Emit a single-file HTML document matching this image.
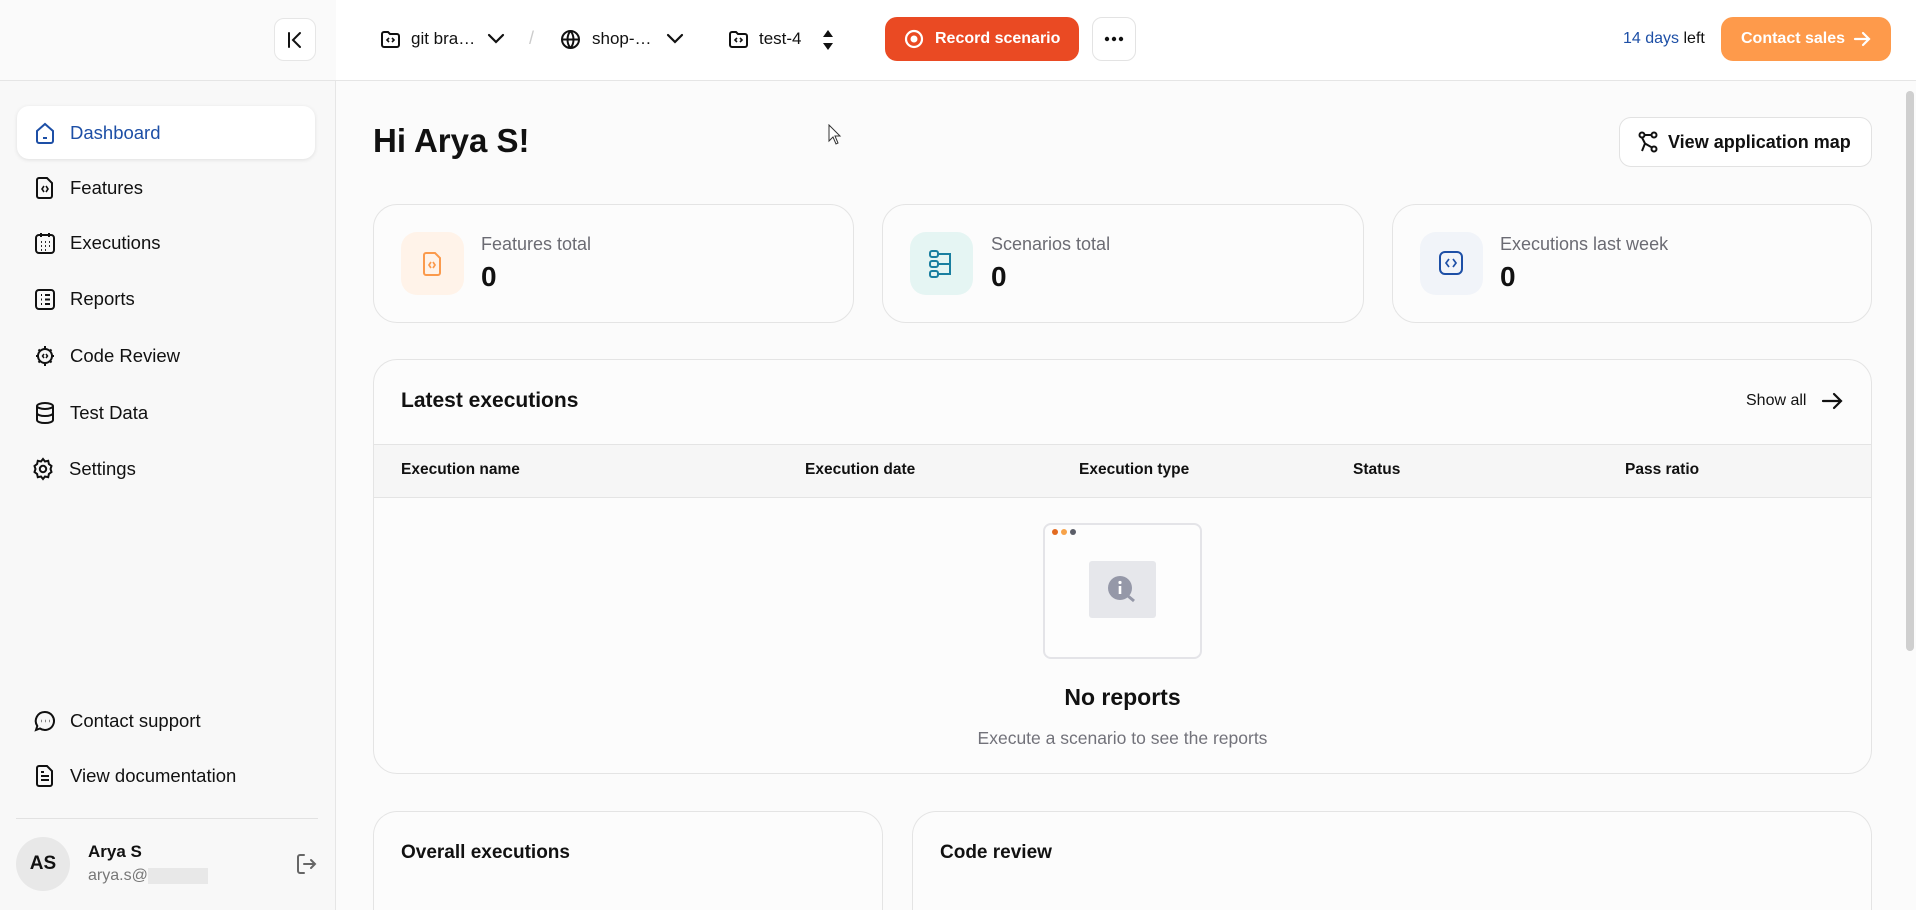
<!DOCTYPE html>
<html style="overflow:hidden;height:910px"><head><meta charset="utf-8"><style>
*{box-sizing:border-box;margin:0;padding:0}
body{width:1916px;height:910px;overflow:hidden;background:#fbfbfb;font-family:"Liberation Sans",sans-serif;color:#111;position:relative}
.a{position:absolute}
svg{display:block}
.side{left:0;top:0;width:336px;height:910px;background:#f8f8f8;border-right:1px solid #e6e6e6}
.hdr{left:336px;top:0;width:1580px;height:81px;background:#fff;border-bottom:1px solid #e5e5e5}
.sidetop{left:0;top:0;width:336px;height:81px;background:#fafafa;border-bottom:1px solid #e5e5e5}
.nav{left:17px;width:298px;height:53px;display:flex;align-items:center;padding-left:17px;font-size:18.5px;gap:14px}
.card{background:#fcfcfc;border:1px solid #e4e4e4;border-radius:24px}
.lbl{font-size:18px;color:#6b6b73}
.val{font-size:28px;font-weight:bold}
.th{font-size:15.5px;font-weight:bold;top:461px}
</style></head><body>
<div class="a side"></div>
<div class="a sidetop"></div>
<div class="a hdr"></div>
<div class="a" style="left:274px;top:18px;width:42px;height:43px;background:#fff;border:1px solid #e6e6e6;border-radius:10px"></div>
<svg class="a" style="left:284px;top:29px" width="22" height="22" viewBox="0 0 22 22" fill="none" stroke="#111" stroke-width="2" stroke-linecap="round"><path d="M5 4v14M16 4l-7 7 7 7"/></svg>
<svg class="a" style="left:380px;top:29px" width="21" height="21" viewBox="0 0 21 21" fill="none" stroke="#111" stroke-width="2"><path d="M2 5a2 2 0 0 1 2-2h4l2 2h7a2 2 0 0 1 2 2v9a2 2 0 0 1-2 2H4a2 2 0 0 1-2-2z"/><path d="M9 9l-2 2 2 2M12 9l2 2-2 2" stroke-width="1.6"/></svg>
<div class="a" style="left:411px;top:29px;font-size:17px">git bra…</div>
<svg class="a" style="left:487px;top:32px" width="18" height="14" viewBox="0 0 18 14" fill="none" stroke="#111" stroke-width="2.2" stroke-linecap="round"><path d="M2 3l7 7 7-7"/></svg>
<div class="a" style="left:529px;top:28px;font-size:18px;color:#ccc">/</div>
<svg class="a" style="left:560px;top:29px" width="21" height="21" viewBox="0 0 21 21" fill="none" stroke="#111" stroke-width="2"><circle cx="10.5" cy="10.5" r="8.5"/><path d="M2 10.5h17M10.5 2c-4 4.5-4 12.5 0 17M10.5 2c4 4.5 4 12.5 0 17"/></svg>
<div class="a" style="left:592px;top:29px;font-size:17px">shop-…</div>
<svg class="a" style="left:666px;top:32px" width="18" height="14" viewBox="0 0 18 14" fill="none" stroke="#111" stroke-width="2.2" stroke-linecap="round"><path d="M2 3l7 7 7-7"/></svg>
<svg class="a" style="left:728px;top:29px" width="21" height="21" viewBox="0 0 21 21" fill="none" stroke="#111" stroke-width="2"><path d="M2 5a2 2 0 0 1 2-2h4l2 2h7a2 2 0 0 1 2 2v9a2 2 0 0 1-2 2H4a2 2 0 0 1-2-2z"/><path d="M9 9l-2 2 2 2M12 9l2 2-2 2" stroke-width="1.6"/></svg>
<div class="a" style="left:759px;top:29px;font-size:17px">test-4</div>
<svg class="a" style="left:822px;top:29px" width="12" height="22" viewBox="0 0 12 22" fill="#111"><path d="M6 1l5 7H1zM6 21l5-7H1z"/></svg>
<div class="a" style="left:885px;top:17px;width:194px;height:44px;background:#ea4a23;border-radius:12px;color:#fff;font-size:16px;font-weight:bold;display:flex;align-items:center;padding-left:50px">Record scenario</div>
<svg class="a" style="left:904px;top:29px" width="20" height="20" viewBox="0 0 20 20"><circle cx="10" cy="10" r="8" fill="none" stroke="#fff" stroke-width="2.2"/><circle cx="10" cy="10" r="3.5" fill="#fff"/></svg>
<div class="a" style="left:1092px;top:17px;width:44px;height:44px;background:#fff;border:1px solid #e3e3e3;border-radius:10px"></div>
<svg class="a" style="left:1104px;top:36px" width="20" height="6" viewBox="0 0 20 6" fill="#111"><circle cx="3" cy="3" r="2.2"/><circle cx="10" cy="3" r="2.2"/><circle cx="17" cy="3" r="2.2"/></svg>
<div class="a" style="left:1623px;top:30px;font-size:16px"><span style="color:#1d4fa6">14 days</span> left</div>
<div class="a" style="left:1721px;top:17px;width:170px;height:44px;background:#fe9a4b;border-radius:12px;color:#fff;font-size:16px;font-weight:bold;display:flex;align-items:center;padding-left:20px">Contact sales</div>
<svg class="a" style="left:1852px;top:29px" width="20" height="20" viewBox="0 0 20 20" fill="none" stroke="#fff" stroke-width="2.2" stroke-linecap="round"><path d="M3 10h14M11 4l6 6-6 6"/></svg>
<div class="a" style="left:1906px;top:91px;width:8px;height:560px;background:#cfcfcf;border-radius:4px"></div>
<div class="a nav" style="top:106px;background:#fff;border-radius:12px;box-shadow:0 1px 4px rgba(0,0,0,.1);color:#1d4fa6">
<svg width="22" height="24" viewBox="0 0 22 24" fill="none" stroke="#1d4fa6" stroke-width="2"><path d="M3 10l8-7 8 7v10a2 2 0 0 1-2 2H5a2 2 0 0 1-2-2z"/><path d="M9 17h4"/></svg>Dashboard</div>
<div class="a nav" style="top:161px"><svg width="22" height="24" viewBox="0 0 22 24" fill="none" stroke="#111" stroke-width="2"><path d="M5 2h8l5 5v13a2 2 0 0 1-2 2H5a2 2 0 0 1-2-2V4a2 2 0 0 1 2-2z"/><path d="M10 10l-2 3 2 3M12 10l2 3-2 3" stroke-width="1.6"/></svg>Features</div>
<div class="a nav" style="top:216px"><svg width="22" height="24" viewBox="0 0 22 24" fill="none" stroke="#111" stroke-width="2"><rect x="2" y="4" width="18" height="18" rx="3"/><path d="M7 2v4M15 2v4"/><path d="M7 11h1M11 11h1M15 11h1M7 15h1M11 15h1M15 15h1M7 19h1M11 19h1" stroke-width="1.8"/></svg>Executions</div>
<div class="a nav" style="top:272px"><svg width="22" height="24" viewBox="0 0 22 24" fill="none" stroke="#111" stroke-width="2"><rect x="2" y="3" width="18" height="19" rx="3"/><path d="M7 8h1M11 8h5M7 12.5h1M11 12.5h5M7 17h1M11 17h5"/></svg>Reports</div>
<div class="a nav" style="top:329px"><svg width="22" height="24" viewBox="0 0 22 24" fill="none" stroke="#111" stroke-width="2"><circle cx="11" cy="12" r="7"/><path d="M11 2v3M11 19v3M2 12h2M18 12h2M4.5 5.5l2 2M15.5 16.5l2 2M4.5 18.5l2-2M15.5 7.5l2-2"/><path d="M10 10l-1.5 2 1.5 2M12 10l1.5 2-1.5 2" stroke-width="1.5"/></svg>Code Review</div>
<div class="a nav" style="top:386px"><svg width="22" height="24" viewBox="0 0 22 24" fill="none" stroke="#111" stroke-width="2"><ellipse cx="11" cy="5" rx="8" ry="3"/><path d="M3 5v14c0 1.7 3.6 3 8 3s8-1.3 8-3V5M3 12c0 1.7 3.6 3 8 3s8-1.3 8-3"/></svg>Test Data</div>
<div class="a nav" style="top:442px;padding-left:14px"><svg width="24" height="24" viewBox="0 0 24 24" fill="none" stroke="#111" stroke-width="2"><circle cx="12" cy="12" r="3.2"/><path d="M12 2l2 2.5 3.2-.7.7 3.2L20.5 9l-1 3 1 3-2.6 2 -.7 3.2-3.2-.7L12 22l-2-2.5-3.2.7L6.1 17 3.5 15l1-3-1-3L6.1 7l.7-3.2 3.2.7z"/></svg>Settings</div>
<div class="a nav" style="top:694px"><svg width="22" height="24" viewBox="0 0 22 24" fill="none" stroke="#111" stroke-width="2"><path d="M11 3a9 9 0 1 1-5 16.5L2 21l1.3-4A9 9 0 0 1 11 3z"/><path d="M7 12h.5M11 12h.5M15 12h.5" stroke-width="2.4"/></svg>Contact support</div>
<div class="a nav" style="top:749px"><svg width="22" height="24" viewBox="0 0 22 24" fill="none" stroke="#111" stroke-width="2"><path d="M5 2h8l5 5v13a2 2 0 0 1-2 2H5a2 2 0 0 1-2-2V4a2 2 0 0 1 2-2z"/><path d="M7 12h8M7 16h8M7 8h3"/></svg>View documentation</div>
<div class="a" style="left:16px;top:818px;width:302px;height:1px;background:#e2e2e2"></div>
<div class="a" style="left:16px;top:837px;width:54px;height:54px;border-radius:50%;background:#e8e8e8;text-align:center;line-height:54px;font-weight:bold;font-size:19px">AS</div>
<div class="a" style="left:88px;top:842px;font-size:17px;font-weight:bold">Arya S</div>
<div class="a" style="left:88px;top:867px;font-size:16px;color:#777">arya.s@<span style="display:inline-block;width:60px;height:16px;background:#e8e8e8;vertical-align:middle"></span></div>
<svg class="a" style="left:294px;top:852px" width="24" height="24" viewBox="0 0 24 24" fill="none" stroke="#666" stroke-width="2" stroke-linecap="round"><path d="M10 3H6a2 2 0 0 0-2 2v14a2 2 0 0 0 2 2h4M10 12h11M17 8l4 4-4 4"/></svg>
<div class="a" style="left:373px;top:122px;font-size:33px;font-weight:bold">Hi Arya S!</div>
<div class="a" style="left:1619px;top:117px;width:253px;height:50px;background:#fff;border:1px solid #e2e2e2;border-radius:12px;display:flex;align-items:center;padding-left:48px;font-size:18px;font-weight:bold">View application map</div>
<svg class="a" style="left:1638px;top:131px" width="20" height="22" viewBox="0 0 20 22" fill="none" stroke="#111" stroke-width="2"><circle cx="4" cy="4" r="2.5"/><circle cx="16" cy="4" r="2.5"/><circle cx="16" cy="18" r="2.5"/><path d="M4 6.5l3 6 7 4M6.5 4h7M7 12.5L4 20"/></svg>
<div class="a card" style="left:373px;top:204px;width:481px;height:119px"></div>
<div class="a card" style="left:882px;top:204px;width:482px;height:119px"></div>
<div class="a card" style="left:1392px;top:204px;width:480px;height:119px"></div>
<div class="a" style="left:401px;top:232px;width:63px;height:63px;border-radius:16px;background:#fff3e9"></div>
<svg class="a" style="left:420px;top:251px" width="24" height="26" viewBox="0 0 24 26" fill="none" stroke="#fb9a4c" stroke-width="2"><path d="M6 2h9l5 5v15a2 2 0 0 1-2 2H6a2 2 0 0 1-2-2V4a2 2 0 0 1 2-2z"/><path d="M11 11l-2 3 2 3M13 11l2 3-2 3" stroke-width="1.7"/></svg>
<div class="a lbl" style="left:481px;top:234px">Features total</div>
<div class="a val" style="left:481px;top:261px">0</div>
<div class="a" style="left:910px;top:232px;width:63px;height:63px;border-radius:16px;background:#e5f5f3"></div>
<svg class="a" style="left:928px;top:249px" width="26" height="30" viewBox="0 0 26 30" fill="none" stroke="#1a7fa0" stroke-width="2"><rect x="2" y="2" width="8" height="6" rx="2"/><rect x="2" y="12" width="8" height="6" rx="2"/><rect x="2" y="22" width="8" height="6" rx="2"/><path d="M10 5h12v10H10M22 15v10H10"/></svg>
<div class="a lbl" style="left:991px;top:234px">Scenarios total</div>
<div class="a val" style="left:991px;top:261px">0</div>
<div class="a" style="left:1420px;top:232px;width:63px;height:63px;border-radius:16px;background:#f1f4f9"></div>
<svg class="a" style="left:1438px;top:250px" width="26" height="26" viewBox="0 0 26 26" fill="none" stroke="#1d4fa6" stroke-width="2"><rect x="2" y="2" width="22" height="22" rx="5"/><path d="M11 9l-3 4 3 4M15 9l3 4-3 4" stroke-width="1.7"/></svg>
<div class="a lbl" style="left:1500px;top:234px">Executions last week</div>
<div class="a val" style="left:1500px;top:261px">0</div>
<div class="a card" style="left:373px;top:359px;width:1499px;height:415px;overflow:hidden">
<div class="a" style="left:0;top:84px;width:1499px;height:54px;background:#f6f6f6;border-top:1px solid #e4e4e4;border-bottom:1px solid #e4e4e4"></div>
</div>
<div class="a" style="left:401px;top:389px;font-size:21px;font-weight:bold">Latest executions</div>
<div class="a" style="left:1746px;top:392px;font-size:16px">Show all</div>
<svg class="a" style="left:1821px;top:390px" width="22" height="22" viewBox="0 0 22 22" fill="none" stroke="#111" stroke-width="2.2" stroke-linecap="round"><path d="M2 11h18M13 4l7 7-7 7"/></svg>
<div class="a th" style="left:401px">Execution name</div>
<div class="a th" style="left:805px">Execution date</div>
<div class="a th" style="left:1079px">Execution type</div>
<div class="a th" style="left:1353px">Status</div>
<div class="a th" style="left:1625px">Pass ratio</div>
<div class="a" style="left:1043px;top:523px;width:159px;height:136px;border:2px solid #e4e4e8;border-radius:8px;background:#fdfdfd"></div>
<div class="a" style="left:1052px;top:529px;width:6px;height:6px;border-radius:50%;background:#e26a20"></div>
<div class="a" style="left:1061px;top:529px;width:6px;height:6px;border-radius:50%;background:#f7a34a"></div>
<div class="a" style="left:1070px;top:529px;width:6px;height:6px;border-radius:50%;background:#5b5e68"></div>
<div class="a" style="left:1089px;top:561px;width:67px;height:57px;border-radius:3px;background:#e6e7eb"></div>
<svg class="a" style="left:1107px;top:575px" width="30" height="30" viewBox="0 0 30 30"><circle cx="13" cy="13" r="12" fill="#9598a8"/><path d="M21 21l6 5" stroke="#9598a8" stroke-width="3"/><rect x="11.7" y="11" width="2.6" height="8" fill="#fff"/><circle cx="13" cy="7.5" r="1.6" fill="#fff"/></svg>
<div class="a" style="left:0;width:2245px;top:684px;text-align:center;font-size:23px;font-weight:bold">No reports</div>
<div class="a" style="left:0;width:2245px;top:728px;text-align:center;font-size:17.5px;color:#72727a">Execute a scenario to see the reports</div>
<div class="a card" style="left:373px;top:811px;width:510px;height:130px;border-bottom-left-radius:0;border-bottom-right-radius:0;height:99px;border-bottom:none"></div>
<div class="a card" style="left:912px;top:811px;width:960px;height:99px;border-bottom-left-radius:0;border-bottom-right-radius:0;border-bottom:none"></div>
<div class="a" style="left:401px;top:842px;font-size:19px;font-weight:bold">Overall executions</div>
<div class="a" style="left:940px;top:842px;font-size:19px;font-weight:bold">Code review</div>
<svg class="a" style="left:828px;top:124px" width="14" height="22" viewBox="0 0 14 22"><path d="M1 1v16l4-4 3 7 2-1-3-7h5z" fill="#fff" stroke="#333" stroke-width="1"/></svg>
</body></html>
